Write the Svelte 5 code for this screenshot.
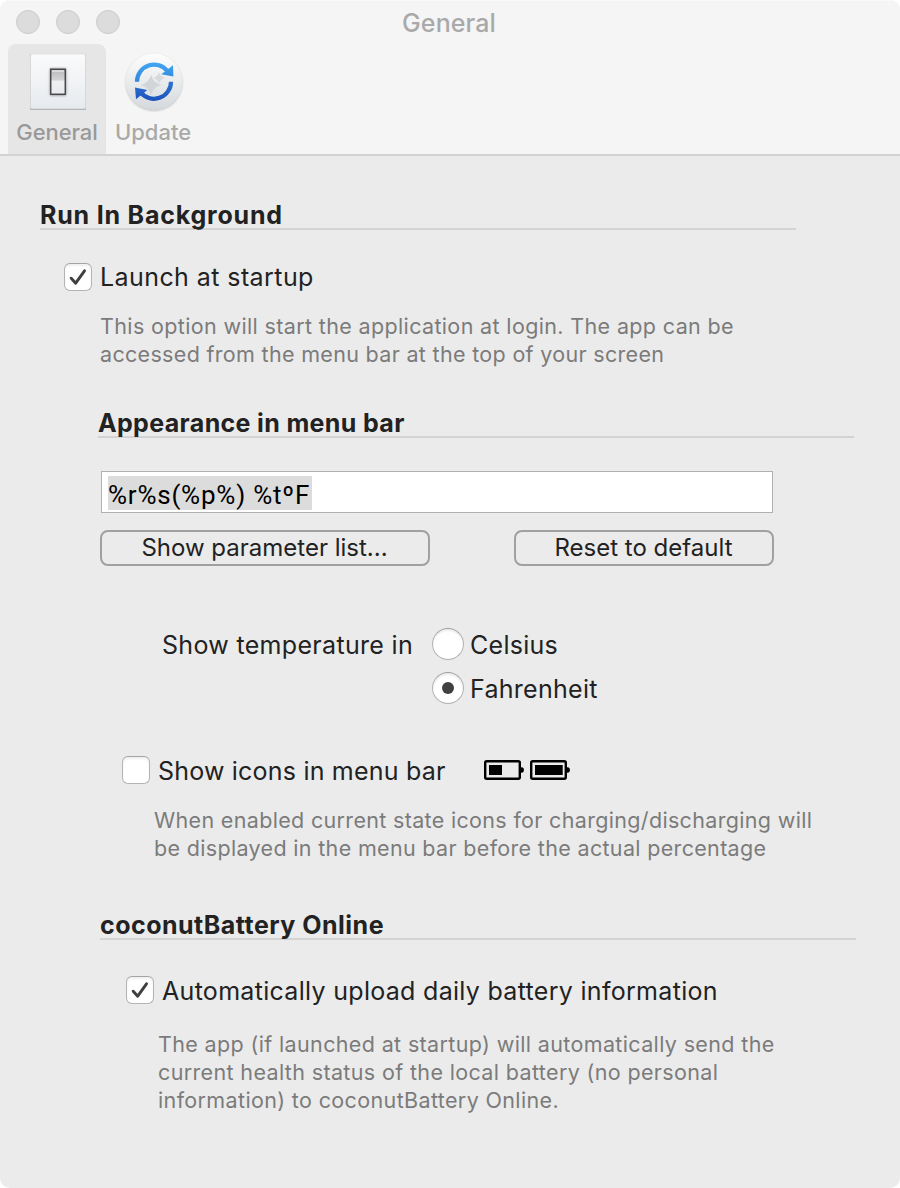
<script>
  let launch = $state(true);
  let icons = $state(false);
  let upload = $state(true);
  let unit = $state('F');
</script>

{#snippet check(on)}
  <span class="box">
    {#if on}
      <svg width="28" height="28" viewBox="0 0 28 28"><path d="M7.2 15.2 11.7 20.2 20.5 7.8" fill="none" stroke="#3f3f3f" stroke-width="2.9" stroke-linecap="round" stroke-linejoin="round" /></svg>
    {/if}
  </span>
{/snippet}

{#snippet battery(level)}
  <svg width="40" height="20" viewBox="0 0 40 20">
    <rect x="1.2" y="1.2" width="34.6" height="17.6" rx="1.5" fill="none" stroke="#000" stroke-width="2.4" />
    <ellipse cx="37.6" cy="10" rx="2.3" ry="2.7" fill="#000" />
    <rect x="5" y="5" width={level} height="10" fill="#000" />
  </svg>
{/snippet}

<div class="window">
  <header>
    <div class="titlebar">
      <div class="lights"><i></i><i></i><i></i></div>
      <span class="title">General</span>
    </div>
    <nav>
      <div class="tab active">
        <svg width="64" height="62" viewBox="0 0 64 62">
          <defs>
            <linearGradient id="plate" x1="0" y1="0" x2="0" y2="1"><stop offset="0" stop-color="#fbfbfc" /><stop offset="1" stop-color="#e6eaee" /></linearGradient>
            <linearGradient id="rocker" x1="0" y1="0" x2="0" y2="1"><stop offset="0" stop-color="#b9b9bb" /><stop offset=".44" stop-color="#d4d4d6" /><stop offset=".46" stop-color="#eff0f2" /><stop offset="1" stop-color="#e6e9ed" /></linearGradient>
            <filter id="soft" x="-50%" y="-50%" width="200%" height="200%"><feGaussianBlur stdDeviation="1.3" /></filter>
          </defs>
          <rect x="4" y="4" width="56" height="56" rx="1.5" fill="#a9adb0" />
          <rect x="4.5" y="4" width="55" height="54.8" rx="1.5" fill="url(#plate)" stroke="#d9dcde" stroke-width=".7" />
          <rect x="23.5" y="18" width="17" height="28" rx="2" fill="#777" opacity=".55" filter="url(#soft)" />
          <rect x="24.7" y="19.3" width="14.6" height="25" fill="url(#rocker)" stroke="#48484b" stroke-width="1.5" />
          <path d="M26 21h12" stroke="#f6f6f6" stroke-width="1.2" />
        </svg>
        <span>General</span>
      </div>
      <div class="tab update">
        <svg width="64" height="62" viewBox="0 0 64 62">
          <defs>
            <linearGradient id="disc" x1="0" y1="0" x2="0" y2="1"><stop offset="0" stop-color="#fdfdfd" /><stop offset="1" stop-color="#d5d9dc" /></linearGradient>
            <linearGradient id="blueTop" x1="0" y1="12" x2="0" y2="32" gradientUnits="userSpaceOnUse"><stop offset="0" stop-color="#43a6f2" /><stop offset="1" stop-color="#2f86da" /></linearGradient>
            <linearGradient id="blueBottom" x1="0" y1="32" x2="0" y2="52" gradientUnits="userSpaceOnUse"><stop offset="0" stop-color="#2c74d2" /><stop offset="1" stop-color="#1b50bc" /></linearGradient>
          </defs>
          <circle cx="32" cy="32.8" r="28.2" fill="#8b8f92" opacity=".5" filter="url(#soft)" />
          <circle cx="32" cy="31.8" r="28.2" fill="url(#disc)" />
          <path d="M29 24.5Q30.6 32.8 39.5 35Q30.6 37.2 29 45.5Q27.4 37.2 18.5 35Q27.4 32.8 29 24.5Z" fill="#d1d5d7" />
          <path d="M37 22Q38 27 43.5 28Q38 29 37 34Q36 29 30.5 28Q36 27 37 22Z" fill="#d7dadc" />
          <path d="M15 31.7A17 17 0 0 1 45.5 21.3" fill="none" stroke="url(#blueTop)" stroke-width="4.2" />
          <path d="M51 15.3 51.4 26.5 39.3 24.3Z" fill="url(#blueTop)" />
          <path d="M49 31.7A17 17 0 0 1 18.5 42.1" fill="none" stroke="url(#blueBottom)" stroke-width="4.2" />
          <path d="M14 49.3 13 37.5 25.3 40Z" fill="url(#blueBottom)" />
        </svg>
        <span>Update</span>
      </div>
    </nav>
  </header>

  <main>
    <h2 class="h-run">Run In Background</h2>
    <label class="row launch">
      <input type="checkbox" bind:checked={launch} />{@render check(launch)}<span class="text">Launch at startup</span>
    </label>
    <p class="p1"><span class="wide">This option will start the application at login. The app can be</span><br />accessed from the menu bar at the top of your screen</p>

    <h2 class="h-menu">Appearance in menu bar</h2>
    <div class="field"><span>%r%s(%p%) %tºF</span></div>
    <div class="buttons">
      <button class="show">Show parameter list...</button>
      <button class="reset">Reset to default</button>
    </div>

    <div class="temperature">
      <span class="t-temp">Show temperature in</span>
      <div class="radios">
        <label><input type="radio" value="C" bind:group={unit} /><span class="radio" class:on={unit === 'C'}></span><span>Celsius</span></label>
        <label><input type="radio" value="F" bind:group={unit} /><span class="radio" class:on={unit === 'F'}></span><span>Fahrenheit</span></label>
      </div>
    </div>

    <div class="row icons">
      <label><input type="checkbox" bind:checked={icons} />{@render check(icons)}<span class="text">Show icons in menu bar</span></label>
      <div class="batteries">{@render battery(13)}{@render battery(27.7)}</div>
    </div>
    <p class="p2">When enabled current state icons for charging/discharging will<br />be displayed in the menu bar before the actual percentage</p>

    <h2 class="h-online">coconutBattery Online</h2>
    <label class="row upload">
      <input type="checkbox" bind:checked={upload} />{@render check(upload)}<span class="text">Automatically upload daily battery information</span>
    </label>
    <p class="p3">The app (if launched at startup) will automatically send the<br />current health status of the local battery (no personal<br />information) to coconutBattery Online.</p>
  </main>
</div>

<style>
  :global(body) { background: #fff; }
  * { box-sizing: border-box; }
  .window {
    width: 900px;
    height: 1188px;
    overflow: hidden;
    border-radius: 10px;
    background: #ebebeb;
    color: #222;
    font: 25px/28px Inter, "Liberation Sans", sans-serif;
    white-space: nowrap;
  }
  header { height: 156px; background: #f5f5f5; border-top: 1px solid #fafafa; border-bottom: 2px solid #d2d2d2; color: #a9a9a9; }
  .titlebar { height: 43px; display: grid; grid-template-columns: 1fr auto 1fr; }
  .lights { display: flex; gap: 16px; padding: 9px 0 0 16px; }
  .lights i { width: 24px; height: 24px; border-radius: 50%; background: #dcdcdc; border: 1px solid #cacaca; }
  .title { padding: 8px 2px 0 0; font-weight: 450; letter-spacing: 0.1px; }
  nav { display: flex; height: 110px; padding-left: 8px; font-size: 22px; font-weight: 450; }
  .tab { width: 98px; padding-top: 6px; border-radius: 8px 8px 0 0; display: flex; flex-direction: column; align-items: center; }
  .tab svg { flex: none; }
  .tab span { margin-top: 6px; }
  .update { width: 94px; }
  .update svg { margin-left: 2px; }
  .active { background: #e6e6e6; color: #999; }
  .active svg { margin-left: 2px; }
  .active span { letter-spacing: -0.1px; }
  main { padding: 40px 0 0 40px; }
  h2 { margin: 0; width: 756px; height: 34px; border-bottom: 2px solid #d3d3d3; font-size: 25px; line-height: 38px; font-weight: 700; }
  .h-run { letter-spacing: 0.8px; }
  label { display: flex; }
  input { appearance: none; width: 0; height: 0; margin: 0; position: absolute; opacity: 0; }
  .box { flex: none; width: 28px; height: 28px; border: 1px solid #b4b4b4; border-top-color: #a4a4a4; border-radius: 6px; background: #fff; box-shadow: inset 0 2px 2px #f0f0f0; }
  .box svg { display: block; margin: -1px; }
  .row .text { margin-left: 8px; }
  .launch { margin: 33px 0 0 24px; letter-spacing: 0.42px; }
  p { margin: 0; font-size: 21.5px; line-height: 28px; color: #7b7b7b; }
  .p1 { margin: 21px 0 0 60px; letter-spacing: 0.32px; }
  .wide { letter-spacing: 0.36px; }
  .h-menu { margin: 36px 0 0 58px; letter-spacing: 0.35px; }
  .field { margin: 33px 0 0 61px; width: 672px; height: 42px; padding: 4px 6px; border: 1px solid #b0b0b0; background: #fff; color: #000; font-family: Roboto, sans-serif; font-size: 26px; letter-spacing: 0.78px; }
  .field span { display: block; width: 204px; height: 34px; line-height: 38px; background: #dcdcdc; }
  .buttons { display: flex; justify-content: space-between; width: 674px; margin: 17px 0 0 60px; }
  button { height: 36px; padding: 0 1px 0 0; border: 2px solid #a0a0a0; border-radius: 8px; background: transparent; color: #222; font: 24px/32px Inter, sans-serif; }
  .show { width: 330px; }
  .reset { width: 260px; }
  .temperature { display: flex; margin: 62px 0 0 122px; line-height: 34px; }
  .t-temp { width: 270px; letter-spacing: 0.32px; }
  .radios { display: flex; flex-direction: column; gap: 12px; letter-spacing: 0.28px; }
  .radios label { height: 32px; }
  .radio { display: grid; place-items: center; width: 32px; height: 32px; margin-right: 6px; border: 1px solid #b4b4b4; border-top-color: #a0a0a0; border-radius: 50%; background: #fff; box-shadow: inset 0 2px 2px #ececec; }
  .on::after { content: ""; width: 12px; height: 12px; border-radius: 50%; background: #404040; }
  .icons { display: flex; align-items: center; margin: 52px 0 0 82px; height: 28px; letter-spacing: 0.2px; line-height: 30px; }
  .icons label { width: 362px; height: 28px; }
  .batteries { display: flex; gap: 6px; }
  .batteries svg { display: block; }
  .p2 { margin: 22px 0 0 114px; letter-spacing: 0.33px; }
  .h-online { margin: 44px 0 0 60px; letter-spacing: 0.48px; }
  .upload { height: 28px; margin: 36px 0 0 86px; letter-spacing: 0.3px; line-height: 30px; }
  .p3 { margin: 26px 0 0 118px; letter-spacing: 0.36px; }
</style>
